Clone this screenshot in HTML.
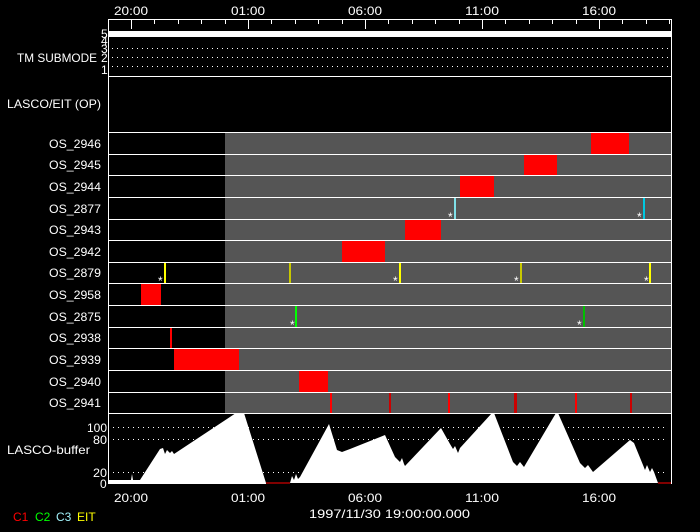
<!DOCTYPE html>
<html><head><meta charset="utf-8"><style>
html,body{margin:0;padding:0;background:#000;width:700px;height:532px;overflow:hidden}
svg{display:block}
text{font-family:"Liberation Sans",sans-serif;font-size:12px;fill:#fff}
</style></head><body>
<svg width="700" height="532" viewBox="0 0 700 532" xmlns="http://www.w3.org/2000/svg">
<rect width="700" height="532" fill="#000"/>
<!-- top axis labels -->
<g>
<text x="114" y="15" textLength="34" lengthAdjust="spacingAndGlyphs">20:00</text>
<text x="231" y="15" textLength="34" lengthAdjust="spacingAndGlyphs">01:00</text>
<text x="348" y="15" textLength="34" lengthAdjust="spacingAndGlyphs">06:00</text>
<text x="465" y="15" textLength="34" lengthAdjust="spacingAndGlyphs">11:00</text>
<text x="582" y="15" textLength="34" lengthAdjust="spacingAndGlyphs">16:00</text>
</g>
<!-- frame -->
<line x1="108" y1="19.5" x2="671" y2="19.5" stroke="#fff"/>
<g stroke="#fff">
<line x1="131.5" y1="19" x2="131.5" y2="29"/><line x1="248.5" y1="19" x2="248.5" y2="29"/><line x1="365.5" y1="19" x2="365.5" y2="29"/><line x1="482.5" y1="19" x2="482.5" y2="29"/><line x1="599.5" y1="19" x2="599.5" y2="29"/>
<line x1="154.5" y1="19" x2="154.5" y2="24"/><line x1="178.5" y1="19" x2="178.5" y2="24"/><line x1="201.5" y1="19" x2="201.5" y2="24"/><line x1="225.5" y1="19" x2="225.5" y2="24"/>
<line x1="271.5" y1="19" x2="271.5" y2="24"/><line x1="295.5" y1="19" x2="295.5" y2="24"/><line x1="318.5" y1="19" x2="318.5" y2="24"/><line x1="342.5" y1="19" x2="342.5" y2="24"/>
<line x1="388.5" y1="19" x2="388.5" y2="24"/><line x1="412.5" y1="19" x2="412.5" y2="24"/><line x1="435.5" y1="19" x2="435.5" y2="24"/><line x1="459.5" y1="19" x2="459.5" y2="24"/>
<line x1="505.5" y1="19" x2="505.5" y2="24"/><line x1="529.5" y1="19" x2="529.5" y2="24"/><line x1="552.5" y1="19" x2="552.5" y2="24"/><line x1="576.5" y1="19" x2="576.5" y2="24"/>
<line x1="622.5" y1="19" x2="622.5" y2="24"/><line x1="646.5" y1="19" x2="646.5" y2="24"/><line x1="669.5" y1="19" x2="669.5" y2="24"/>
</g>
<!-- TM submode -->
<rect x="109" y="31" width="562" height="6" fill="#fff"/>
<g stroke="#fff" stroke-dasharray="1 4">
<line x1="112" y1="48.5" x2="671" y2="48.5"/><line x1="112" y1="57.5" x2="671" y2="57.5"/><line x1="112" y1="66.5" x2="671" y2="66.5"/>
</g>
<g style="font-size:9px">
<text x="101" y="38">5</text><text x="101" y="45">4</text><text x="101" y="53">3</text><text x="101" y="62">2</text><text x="101" y="74">1</text>
</g>
<text x="17" y="62" textLength="80" lengthAdjust="spacingAndGlyphs">TM SUBMODE</text>
<text x="7" y="108" textLength="94" lengthAdjust="spacingAndGlyphs">LASCO/EIT (OP)</text>
<line x1="108" y1="76.5" x2="671" y2="76.5" stroke="#fff"/>
<!-- rows gray -->
<rect x="225" y="132" width="446" height="281" fill="#555"/>
<rect x="174" y="348" width="65" height="22" fill="#f00"/>
<!-- red boxes -->
<g fill="#f00">
<rect x="591" y="132" width="38" height="22"/>
<rect x="524" y="154" width="33" height="21"/>
<rect x="460" y="175" width="34" height="22"/>
<rect x="405" y="219" width="36" height="21"/>
<rect x="342" y="240" width="43" height="22"/>
<rect x="141" y="283" width="20" height="22"/>
<rect x="299" y="370" width="29" height="22"/>
<rect x="170" y="327" width="2" height="21"/>
<rect x="330" y="392" width="2" height="21"/><rect x="389" y="392" width="2" height="21" fill="#c00"/><rect x="448" y="392" width="2" height="21"/><rect x="514" y="392" width="3" height="21" fill="#c00"/><rect x="575" y="392" width="2" height="21"/><rect x="630" y="392" width="2" height="21" fill="#c00"/>
</g>
<!-- cyan -->
<rect x="454" y="197" width="2" height="22" fill="#80e0e8"/>
<rect x="643" y="197" width="2" height="22" fill="#00c8e0"/>
<!-- yellow -->
<rect x="164" y="262" width="2" height="21" fill="#ff0"/>
<rect x="289" y="262" width="2" height="21" fill="#c8c800"/>
<rect x="399" y="262" width="2" height="21" fill="#ff0"/>
<rect x="520" y="262" width="2" height="21" fill="#c8c800"/>
<rect x="649" y="262" width="2" height="21" fill="#ff0"/>
<!-- green -->
<rect x="295" y="305" width="2" height="22" fill="#0f0"/>
<rect x="583" y="305" width="2" height="22" fill="#00c000"/>
<!-- asterisks -->
<g style="font-size:8px">
<text x="448" y="221">*</text><text x="637" y="221">*</text>
<text x="158" y="285">*</text><text x="393" y="285">*</text><text x="514" y="285">*</text><text x="644" y="285">*</text>
<text x="290" y="329">*</text><text x="577" y="329">*</text>
</g>
<!-- row separators -->
<g stroke="#fff">
<line x1="108" y1="132.5" x2="671" y2="132.5"/><line x1="108" y1="154.5" x2="671" y2="154.5"/><line x1="108" y1="175.5" x2="671" y2="175.5"/><line x1="108" y1="197.5" x2="671" y2="197.5"/><line x1="108" y1="219.5" x2="671" y2="219.5"/><line x1="108" y1="240.5" x2="671" y2="240.5"/><line x1="108" y1="262.5" x2="671" y2="262.5"/><line x1="108" y1="283.5" x2="671" y2="283.5"/><line x1="108" y1="305.5" x2="671" y2="305.5"/><line x1="108" y1="327.5" x2="671" y2="327.5"/><line x1="108" y1="348.5" x2="671" y2="348.5"/><line x1="108" y1="370.5" x2="671" y2="370.5"/><line x1="108" y1="392.5" x2="671" y2="392.5"/><line x1="108" y1="413.5" x2="671" y2="413.5"/>
</g>
<!-- row labels -->
<g>
<text x="49" y="148" textLength="52" lengthAdjust="spacingAndGlyphs">OS_2946</text>
<text x="49" y="169" textLength="52" lengthAdjust="spacingAndGlyphs">OS_2945</text>
<text x="49" y="191" textLength="52" lengthAdjust="spacingAndGlyphs">OS_2944</text>
<text x="49" y="213" textLength="52" lengthAdjust="spacingAndGlyphs">OS_2877</text>
<text x="49" y="234" textLength="52" lengthAdjust="spacingAndGlyphs">OS_2943</text>
<text x="49" y="256" textLength="52" lengthAdjust="spacingAndGlyphs">OS_2942</text>
<text x="49" y="277" textLength="52" lengthAdjust="spacingAndGlyphs">OS_2879</text>
<text x="49" y="299" textLength="52" lengthAdjust="spacingAndGlyphs">OS_2958</text>
<text x="49" y="321" textLength="52" lengthAdjust="spacingAndGlyphs">OS_2875</text>
<text x="49" y="342" textLength="52" lengthAdjust="spacingAndGlyphs">OS_2938</text>
<text x="49" y="364" textLength="52" lengthAdjust="spacingAndGlyphs">OS_2939</text>
<text x="49" y="386" textLength="52" lengthAdjust="spacingAndGlyphs">OS_2940</text>
<text x="49" y="407" textLength="52" lengthAdjust="spacingAndGlyphs">OS_2941</text>
</g>
<!-- buffer panel -->
<g stroke="#fff" stroke-dasharray="1 4">
<line x1="113" y1="427.5" x2="668" y2="427.5"/><line x1="113" y1="439.5" x2="668" y2="439.5"/><line x1="113" y1="472.5" x2="668" y2="472.5"/>
</g>
<polygon fill="#fff" points="109,483 109,480 131,480 132,474 133,480 140,480 160,449 163,448 165,454 167,450 170,453 172,451 174,454 236,413 244,413 266,483 290,483 292,476 294,480 296,474 298,479 300,477 329,424 337,450 342,452 350,449 385,435 395,457 400,462 402,458 404,464 405,466 441,428 450,444 453,449 455,446 458,453 460,448 492,413 494,413 513,462 517,466 520,462 524,467 556,413 558,413 580,463 585,468 588,465 593,472 630,440 634,443 643,465 645,470 647,465 650,472 652,468 654,472 658,483"/>
<line x1="266" y1="483" x2="290" y2="483" stroke="#f00"/>
<line x1="658" y1="483" x2="671" y2="483" stroke="#f00"/>
<line x1="108.5" y1="19" x2="108.5" y2="484" stroke="#fff"/>
<line x1="671.5" y1="19" x2="671.5" y2="484" stroke="#fff"/>
<line x1="108" y1="483.5" x2="266" y2="483.5" stroke="#fff"/>
<g>
<text x="87" y="432" textLength="20" lengthAdjust="spacingAndGlyphs">100</text>
<text x="93" y="444" textLength="14" lengthAdjust="spacingAndGlyphs">80</text>
<text x="93" y="477" textLength="14" lengthAdjust="spacingAndGlyphs">20</text>
<text x="100" y="488">0</text>
<text x="7" y="454" textLength="83" lengthAdjust="spacingAndGlyphs">LASCO-buffer</text>
</g>
<g>
<text x="114" y="502" textLength="34" lengthAdjust="spacingAndGlyphs">20:00</text>
<text x="231" y="502" textLength="34" lengthAdjust="spacingAndGlyphs">01:00</text>
<text x="348" y="502" textLength="34" lengthAdjust="spacingAndGlyphs">06:00</text>
<text x="465" y="502" textLength="34" lengthAdjust="spacingAndGlyphs">11:00</text>
<text x="582" y="502" textLength="34" lengthAdjust="spacingAndGlyphs">16:00</text>
<text x="309" y="518" textLength="161" lengthAdjust="spacingAndGlyphs">1997/11/30 19:00:00.000</text>
</g>
<g style="font-size:9px">
<text x="13" y="521" fill="#f00" style="fill:#f00">C1</text>
<text x="35" y="521" style="fill:#0f0">C2</text>
<text x="56" y="521" style="fill:#a0f0f8">C3</text>
<text x="77" y="521" style="fill:#ff0">EIT</text>
</g>
</svg>
</body></html>
